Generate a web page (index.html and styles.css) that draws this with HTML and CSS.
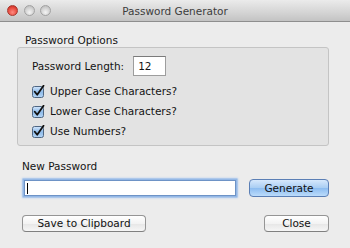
FILE: index.html
```html
<!DOCTYPE html>
<html>
<head>
<meta charset="utf-8">
<link rel="stylesheet" href="styles.css">
</head>
<body>
<div class="window">
  <div class="titlebar">
    <div class="lights">
      <span class="light red"></span>
      <span class="light"></span>
      <span class="light"></span>
    </div>
    <div class="title">Password Generator</div>
    <div class="spacer"></div>
  </div>
  <div class="content">
    <div class="group-label">Password Options</div>
    <div class="group">
      <div class="length-row">
        <span>Password Length:</span>
        <span class="small-input">12</span>
      </div>
      <div class="check-row"><svg class="cb" viewBox="0 0 13 13" width="13" height="13"><defs><linearGradient id="g" x1="0" y1="0" x2="0" y2="1"><stop offset="0" stop-color="#d3e6fb"/><stop offset="0.5" stop-color="#8ebbea"/><stop offset="1" stop-color="#b6d6f6"/></linearGradient></defs><rect x="0.5" y="1.5" width="11" height="11" rx="2" fill="url(#g)" stroke="#4f6682"/><path d="M2.8 6.8 L5.2 9.8 L11.5 0.8" fill="none" stroke="#111" stroke-width="1.8" stroke-linecap="round" stroke-linejoin="round"/></svg><span>Upper Case Characters?</span></div>
      <div class="check-row"><svg class="cb" viewBox="0 0 13 13" width="13" height="13"><rect x="0.5" y="1.5" width="11" height="11" rx="2" fill="url(#g)" stroke="#4f6682"/><path d="M2.8 6.8 L5.2 9.8 L11.5 0.8" fill="none" stroke="#111" stroke-width="1.8" stroke-linecap="round" stroke-linejoin="round"/></svg><span>Lower Case Characters?</span></div>
      <div class="check-row"><svg class="cb" viewBox="0 0 13 13" width="13" height="13"><rect x="0.5" y="1.5" width="11" height="11" rx="2" fill="url(#g)" stroke="#4f6682"/><path d="M2.8 6.8 L5.2 9.8 L11.5 0.8" fill="none" stroke="#111" stroke-width="1.8" stroke-linecap="round" stroke-linejoin="round"/></svg><span>Use Numbers?</span></div>
    </div>
    <div class="bottom">
      <div class="np-label">New Password</div>
      <div class="pw-row">
        <div class="pw-input"><span class="caret"></span></div>
        <div class="btn blue gen">Generate</div>
      </div>
      <div class="btn-row">
        <div class="btn save">Save to Clipboard</div>
        <div class="btn close">Close</div>
      </div>
    </div>
  </div>
</div>
</body>
</html>
```
FILE: styles.css
```css
* { box-sizing: border-box; }
html, body { margin: 0; padding: 0; }
body {
  width: 350px;
  height: 248px;
  overflow: hidden;
  background: #ececec;
  font-family: "DejaVu Sans", sans-serif;
  font-size: 10.5px;
  color: #141414;
}
.titlebar {
  height: 22px;
  display: flex;
  align-items: center;
  background: linear-gradient(#ebebeb, #d4d4d4 60%, #c3c3c3);
  border-bottom: 1px solid #8e8e8e;
}
.lights, .spacer { width: 60px; display: flex; gap: 5.5px; padding-left: 7px; }
.light {
  width: 11px; height: 11px; border-radius: 50%;
  background: radial-gradient(circle at 50% 70%, #f4f4f4, #cfcfcf 60%, #b5b5b5);
  border: 1px solid #a2a2a2;
}
.light.red {
  background: radial-gradient(circle at 50% 70%, #ff8a80, #e6483c 60%, #b8261c);
  border-color: #a6382f;
}
.title { flex: 1; text-align: center; color: #3d3d3d; line-height: 13px; padding-top: 1px; }
.content { padding: 12px 21px 0 17px; }
.group-label { margin-left: 8px; line-height: 13px; height: 13px; }
.group {
  height: 99px;
  background: #e3e3e3;
  border: 1px solid #c4c4c4;
  border-radius: 3px;
  padding: 8px 14px 0 14px;
}
.length-row { display: flex; align-items: center; height: 20px; }
.small-input {
  margin-left: 9px;
  width: 33px; height: 20px;
  background: #fff;
  border: 1px solid #9d9d9d;
  border-top-color: #7b7b7b;
  padding-left: 4px;
  line-height: 18px;
}
.check-row { display: flex; align-items: center; height: 20px; }
.length-row + .check-row { margin-top: 5px; }
.cb { margin-left: 0; margin-right: 5px; flex: none; }
.bottom { padding-left: 5px; }
.np-label { margin-top: 14px; line-height: 13px; height: 13px; }
.pw-row { display: flex; align-items: center; height: 18px; margin-top: 6px; }
.pw-input {
  margin-left: 2px;
  width: 212px; height: 16px;
  background: #fff;
  border: 1px solid #6e93c6;
  box-shadow: 0 0 0 1.5px #94b8e6, 0 0 2px 2px #b7d1f1;
  padding: 2px 0 0 2px;
}
.caret { display: block; width: 1px; height: 11px; background: #000; }
.btn {
  height: 18px;
  border: 1px solid #959595;
  border-bottom-color: #808080;
  border-radius: 4px;
  background: linear-gradient(#ffffff, #f3f3f3 50%, #e6e6e6 51%, #f6f6f6);
  text-align: center;
  line-height: 16px;
  color: #111;
}
.btn.blue {
  border-color: #5b7fb5;
  background: linear-gradient(#d6e8fc, #a8cdf3 50%, #8cbcf0 51%, #bcdcfb);
}
.gen { margin-left: auto; width: 80px; }
.btn-row { display: flex; margin-top: 18px; justify-content: space-between; }
.save { width: 124px; height: 17px; line-height: 15px; }
.close { width: 65px; height: 17px; line-height: 15px; }
```
